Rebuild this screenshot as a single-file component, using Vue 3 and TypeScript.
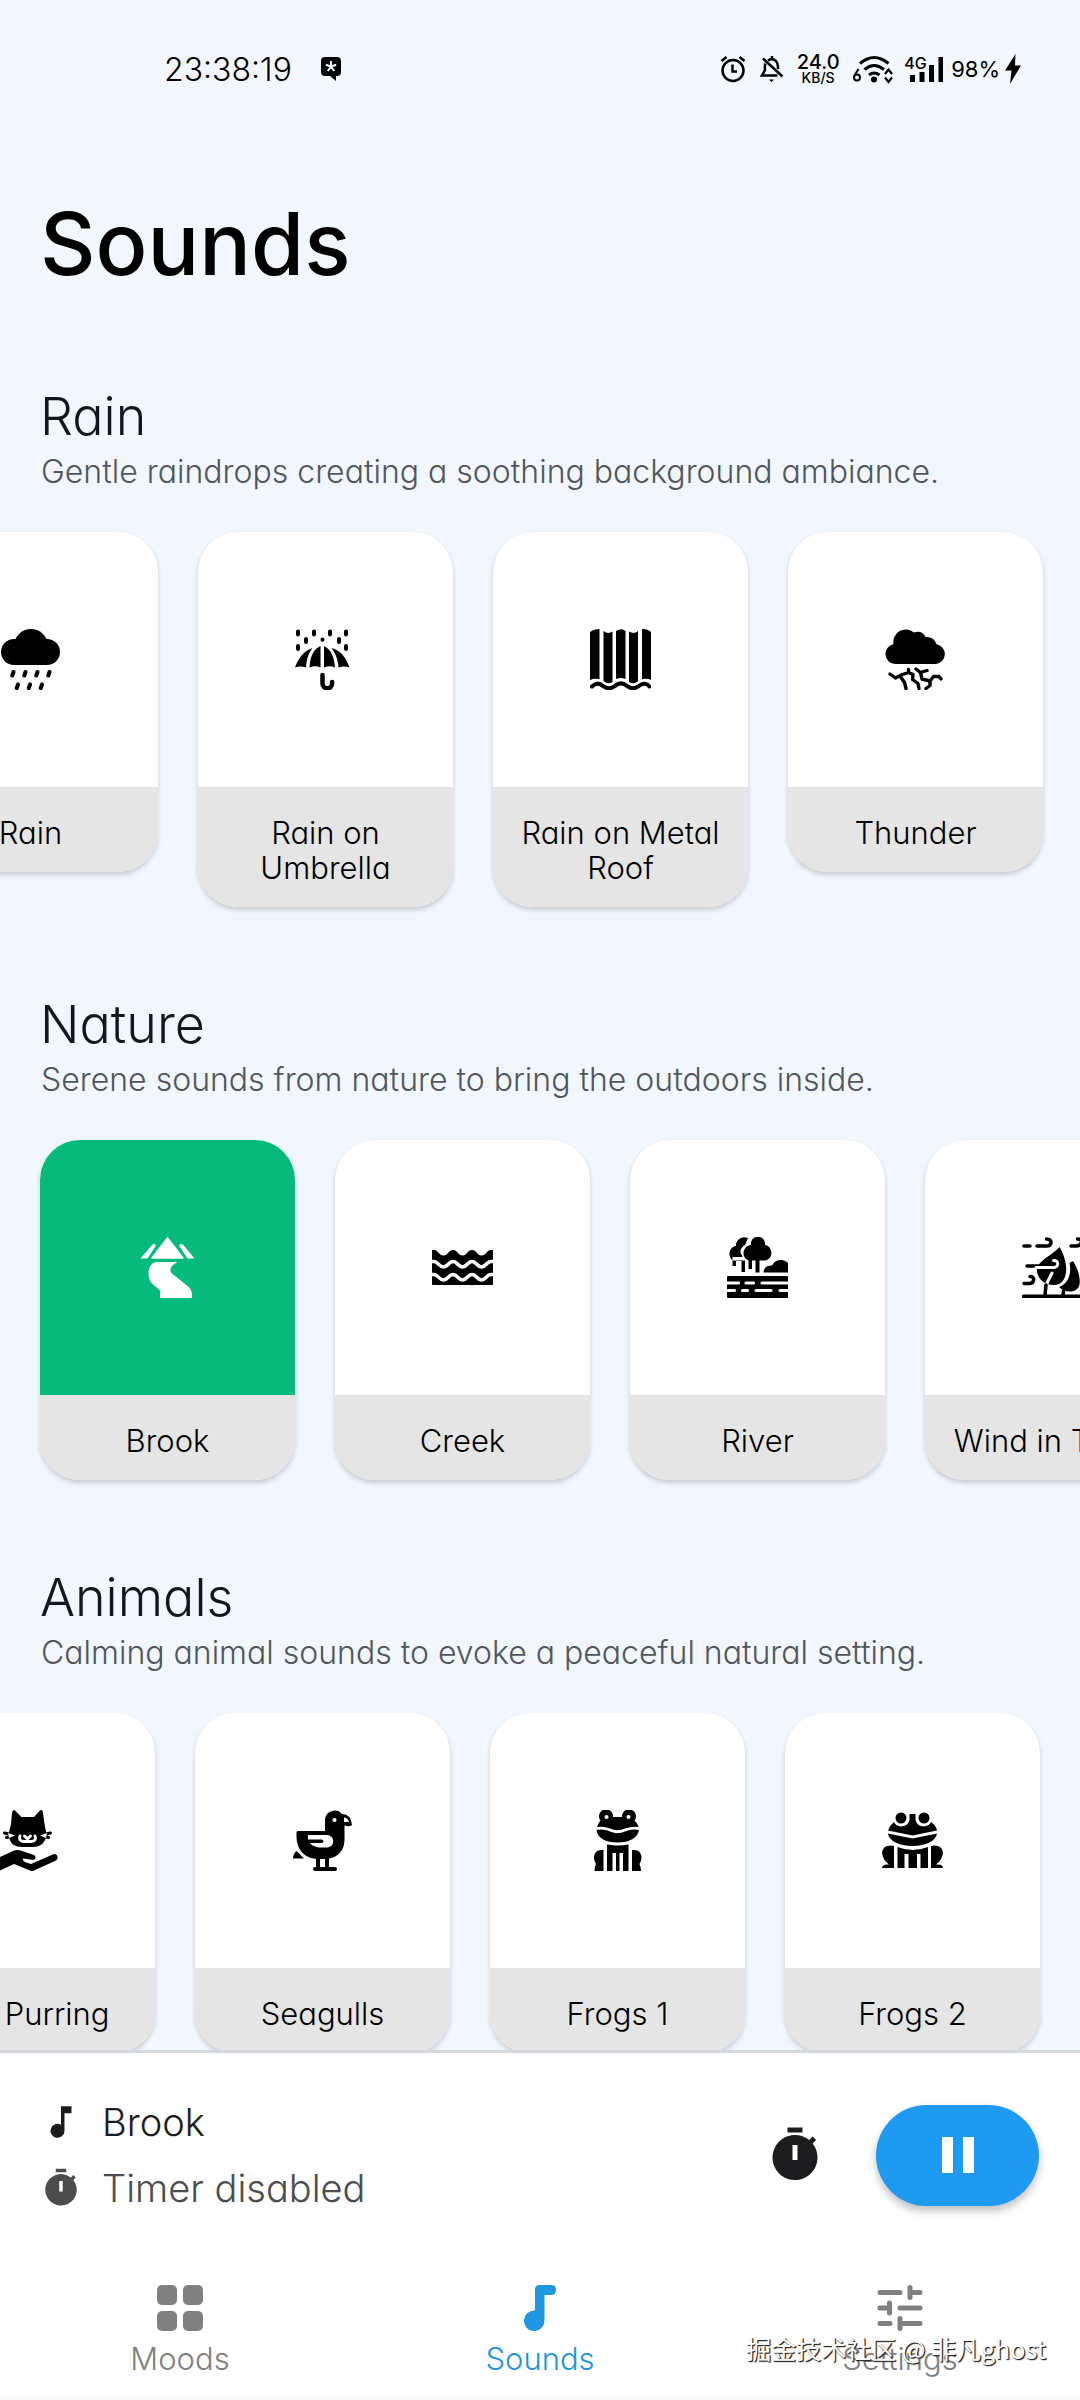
<script setup lang="ts">
import { onMounted, ref } from 'vue'

interface Sound {
  name: string
  icon: string
}

interface Section {
  title: string
  text: string
  scroll: number
  sounds: Sound[]
}

const icons: Record<string, string> = {
  rain: `<rect x="1" y="10" width="59" height="26" rx="13"/><circle cx="31" cy="17" r="17"/>
    <path class="line" stroke-width="4" d="M13.5 43l-1.2 3.5M25.5 43l-1.2 3.5M37.5 43l-1.2 3.5M49.5 43l-1.2 3.5M18 55.500l-1.200 3.500M30 55.500l-1.200 3.500M42 55.500l-1.200 3.500"/>`,
  umbrella: `<path class="line" stroke-width="4" d="M3 2.500v3M19 2.500v3M35 2.500v3M51 2.500v3M11 10v3M44 10v3M27.500 10.500v.2M3 17v3M51 17v3"/>
    <path d="M0 38.500C4 28 9 22 17.500 19C13 25 11.500 31 11 38.500Q5 36.500 0 38.500zM14.500 38.500C15 29 18 20 25.500 17V38.500Q20 36 14.500 38.500zM29 17C36 20 39.500 29 40 38.500Q35 36 29 38.500zM43.500 38.500C43 31 41 25 36.500 19C45 21 51 28 54.500 38.500Q49 36.500 43.500 38.500z"/>
    <path class="line" stroke-width="4.500" d="M27.500 46v8.500a4.800 4.800 0 0 0 9.600 0v-1.500"/>`,
  metal: `<path d="M0 3Q4 0 9.500 0V50Q4 49 0 51zM13.500 2Q18 5.500 22.500 2.500V53Q18 56 13.500 52zM26 2Q31-1.500 35.500 2V50Q31 48 26 50zM39 2.500Q44 5.500 48 2V52Q44 56 39 53zM52 0Q58 0 61 3V51Q58 49 52 50z"/>
    <path class="line" stroke-width="4" d="M2 57.500C5 54.500 9 53.500 13 57C17 60 21 60 25 57C29 53.500 33 53.500 37 57C41 60 45 60 49 57C53 53.500 57 54.500 59.500 57.500"/>`,
  thunder: `<path d="M10 35A10 10 0 0 1 8.500 15.200A12.500 12.500 0 0 1 29 3.500Q37 1 40.500 8Q49 7.500 51.500 15.200A10 10 0 0 1 51 35z"/>
    <path class="line" stroke-width="3.400" d="M5 45l5.500 4 7-3.500 6-2V40.500M15 47l4.500 6.500 1.500 6M23.500 43.500l4.500 2-.5 5 5.500 4 1 5M31 40l4.500 3.500 6.500-2M35.500 43.500l1.500 6.500 8 2v4.500l-4 3M45 52l3.500-4.500h5.500l2 2.500"/>`,
  brook: `<path stroke="currentColor" stroke-width="1.500" stroke-linejoin="round" d="M30.500 1L46 21H15z"/>
    <path d="M3.500 21.500L15.500 7.500Q18 6 19 8.500L10.500 21.500zM57.500 21.500L46 7.500Q43.500 6 42 8.500L50.500 21.500z"/>
    <path d="M19 25H40.500C35 28 31 33 35 36.500L50 48.500Q56 53 55 61H23V57Q25 54 19 50C13 45 11.500 42 11.500 36Q11.500 27 19 25z"/>`,
  creek: `<path d="M0 13h2c4 0 5 5.500 9.500 5.500S16.500 13 21 13s5 5.500 9.500 5.500S35.500 13 40 13s5 5.500 9.500 5.500S55 13 59 13h2v34q0 1-1 1H1q-1 0-1-1z"/>
    <path class="gap" stroke-width="3.600" d="M-1 24.500h3c4 0 5 5.500 9.500 5.500s5-5.500 9.500-5.500 5 5.500 9.500 5.500 5-5.500 9.500-5.500 5 5.500 9.500 5.500 5-5.500 9.500-5.500h3M-1 37.500h3c4 0 5 5.500 9.500 5.500s5-5.500 9.500-5.500 5 5.500 9.500 5.500 5-5.500 9.500-5.500 5 5.500 9.500 5.500 5-5.500 9.500-5.500h3"/>`,
  river: `<path d="M21 1C14-2 8.500 4 9 9C2 10 0 20 6 23.500H18V35h-3.500V24H9v5H5.500V20H16Q10 13 18 8z"/>
    <path stroke="#fff" stroke-width="3.500" d="M24 8C23-3 39-3 38 8C46 9 47 22 38 23.500H23C14 22 15 9 24 8z"/>
    <path d="M24 8C23-3 39-3 38 8C46 9 47 22 38 23.500H32.500V35.500H28.500V23.500H25V32H21.500V23.500C14 21 15 9 24 8zM36.500 35.500Q37 28 45 28.500C48 22 57 21.500 61 26V35.500z"/>
    <rect y="39" width="61" height="22" rx="1"/>
    <path class="gap" stroke-width="3.200" stroke-linecap="round" d="M-2 46H11.500M19 46H26.500M35 46H63M-2 53.500H7.500M15.500 53.500H20.500M29 53.500H44M53 53.500H63"/>`,
  wind: `<path class="line" stroke-width="3.500" d="M2 9H8M15 9H25C30 9 31 2 24.500 2M49 9H54C60 9 62 2 55.500 2M5 29H20M2 46.500H7C13 46.500 13 39 8 39.500"/>
    <path d="M37.500 10C46 24 47 42 37 47C29 50 17 46 15 35C14 24 27 21 37.500 10zM51 24C58 35 60 48 55 52C49 57 41 54 37 50C49 46 49 32 47.500 26z"/>
    <path class="gap" stroke-width="3" stroke-linecap="round" d="M14 30.500H32C37 30.500 37 23 31.500 23.500M30 36L24 48"/>
    <path class="line" stroke-width="3.500" d="M24 48L23 58M41.500 54L41 58M1.500 59.300H60"/>`,
  cat: `<path d="M17.500 0L24.500 7H37L43.500 0Q46 0 46 3L47.500 14L49.500 24C49 33 43 37 36 37H25C17 37 12 33 11.500 24L14 14L15 3Q15.500 0 17.500 0z"/>
    <path class="line" stroke-width="3" d="M7.500 23L12 24M9.500 27.500L13 26.500M53.500 23L49 24M51.500 27.500L48 26.500"/>
    <path fill="#fff" d="M11 23l7 2.500-6 2.500zM50 23l-7 2.500 6 2.500z"/>
    <path class="gap" stroke-width="3" stroke-linecap="round" d="M23 26Q21 31 27 31.500H34Q40 31 38 26M27.500 26L30.500 29L33.500 26"/>
    <path d="M3 47L16 41Q20 39 25 41L37 45Q40 47 37 50L26 48.500Q25 52 34 54L57 44Q61 44 60.500 48.500Q60 50 58 51L38 60Q35.500 62 33 60.500L17 54L3 60.500z"/>`,
  seagull: `<path d="M33 10A9.700 9.700 0 0 1 50 4Q59 4 60 15Q58 17 52.500 15.500V30C52.500 42 44 49 32 49H27C13 49 4.500 40 4.500 26V22.500Q4.500 21 6 21H33z"/>
    <circle cx="42.500" cy="10" r="2" fill="#fff"/><path fill="#fff" d="M52 7.500Q56 8 57 12H52z"/>
    <path fill="#fff" d="M16 25H35A6 6 0 0 1 35 37.500H27Q20 36 18 33H30Q33 31.500 30 29.500H16z"/>
    <path d="M4.500 41L12 48.500H1Q1 44 4.500 41zM24 48h4v10h-4zM33 48h4v10h-4z"/><rect x="21" y="57" width="24" height="4" rx="2"/>`,
  frog: `<path d="M10 17C12 12 12 13 13.500 10.500A7 7 0 1 1 26 7H35A7 7 0 1 1 47.500 10.500C49 13 50 12 51.500 17Q45 16 38 18.500Q30.500 22 23 18.500Q17 16 10 17zM9.500 20Q17 18.500 23 21.500Q30.500 25 38 21.500Q45 18.500 52 20C51 28 42 32.500 30.500 32.500S10 28 9.500 20z"/>
    <circle cx="19.500" cy="7" r="2" fill="#fff"/><circle cx="41.500" cy="7" r="2" fill="#fff"/>
    <path d="M20 34.500Q30.500 36.500 41.500 34.500V61H36V43H32.500V61H29V43H25.500V61H20zM16.500 40V61H7.500Q7.500 57 9 54Q5 47 9 42Q11 39.500 16.500 40zM45 40V61H54Q54 57 52.500 54Q56.500 47 52.500 42Q50.500 39.500 45 40z"/>`,
  toad: `<path d="M27.500 4H33.500V10Q35 16 42 16.500Q48 15.500 49 12Q54 15 55 20.500L30.500 25.500L6 20.500Q8 15 12 12Q13 15.500 19 16.500Q26 16 27.500 10zM6 23.500L30.500 28.500L55 23.500C54 31 44 36 30.500 36S7 31 6 23.500z"/>
    <circle cx="19" cy="8" r="5.500"/><circle cx="42" cy="8" r="5.500"/>
    <path d="M15.500 37Q30.500 43 46 37V58H38.500V44H35V58H26.500V44H22.500V58H15.500zM12 36V58H0Q0 54.500 5 54.500H7Q0 49 0 42Q2 34 12 36zM49 36V58H61Q61 54.500 56 54.500H54Q61 49 61 42Q59 34 49 36z"/>`,
}

const sections: Section[] = [
  {
    title: 'Rain',
    text: 'Gentle raindrops creating a soothing background ambiance.',
    scroll: 137,
    sounds: [
      { name: 'Rain', icon: 'rain' },
      { name: 'Rain on Umbrella', icon: 'umbrella' },
      { name: 'Rain on Metal Roof', icon: 'metal' },
      { name: 'Thunder', icon: 'thunder' },
    ],
  },
  {
    title: 'Nature',
    text: 'Serene sounds from nature to bring the outdoors inside.',
    scroll: 0,
    sounds: [
      { name: 'Brook', icon: 'brook' },
      { name: 'Creek', icon: 'creek' },
      { name: 'River', icon: 'river' },
      { name: 'Wind in Trees', icon: 'wind' },
    ],
  },
  {
    title: 'Animals',
    text: 'Calming animal sounds to evoke a peaceful natural setting.',
    scroll: 140,
    sounds: [
      { name: 'Cat Purring', icon: 'cat' },
      { name: 'Seagulls', icon: 'seagull' },
      { name: 'Frogs 1', icon: 'frog' },
      { name: 'Frogs 2', icon: 'toad' },
    ],
  },
]

const active = ref('Brook')
const rows = ref<HTMLElement[]>([])

onMounted(() => {
  rows.value.forEach((row, i) => {
    row.scrollLeft = sections[i].scroll
  })
})
</script>

<template>
  <div class="app">
    <header class="status">
      <div class="status-side">
        <time class="clock">23:38:19</time>
        <svg width="22" height="26" viewBox="0 0 22 26" aria-hidden="true">
          <path d="M5 1h12a4 4 0 0 1 4 4v11a4 4 0 0 1-4 4h-1v5l-6-5H5a4 4 0 0 1-4-4V5a4 4 0 0 1 4-4z" />
          <path d="M11 10.500V5M11 10.500l5.200-1.700M11 10.500l-5.200-1.700M11 10.500l3.200 4.500M11 10.500l-3.200 4.500" stroke="#f2f7fe" stroke-width="2" fill="none" />
        </svg>
      </div>
      <div class="status-side right">
        <svg width="26" height="28" viewBox="0 0 26 28" fill="none" stroke="#000" stroke-width="2.500" aria-hidden="true">
          <circle cx="13" cy="15.500" r="10.500" /><path d="M12.500 9.500v7h4.500M1.500 6l5-4M24.500 6l-5-4" />
        </svg>
        <svg class="bell" width="24" height="28" viewBox="0 0 24 28" fill="none" stroke="#000" stroke-width="2.500" aria-hidden="true">
          <path d="M8 5.500Q12 2.500 16 6Q18.500 9 18 14M5.500 8.500Q4.500 11 5 15L2 20.500H17.500M3 3.500L22.500 21.500M12 1v3" /><path d="M9 24.500h5l-2.500 2.500z" fill="#000" stroke="none" />
        </svg>
        <div class="speed"><span>24.0</span><small>KB/S</small></div>
        <svg class="wifi" width="42" height="30" viewBox="0 0 42 30" fill="none" stroke="#000" stroke-width="3" aria-hidden="true">
          <path d="M8 9.500Q22 -2.500 36.500 9.500M12.500 15.500Q22 7.500 32 15.500M17 21Q22 17 27.500 21" />
          <circle cx="22" cy="25.500" r="3" fill="#000" stroke="none" />
          <path d="M6.500 15L2.500 21.500" stroke-width="2" /><circle cx="5" cy="23.500" r="3" stroke-width="2" />
          <path d="M33 20l3.500-4.500L40 20M33 23.500l3.500 4.500L40 23.500" stroke-width="2.200" />
        </svg>
        <div class="cell">
          <span>4G</span>
          <svg width="38" height="28" viewBox="0 0 38 28" aria-hidden="true">
            <path d="M4 20h5v7H4zM13.500 17h5v10h-5zM23 10h5v17h-5zM32.500 2h4.500v25h-4.500z" />
          </svg>
        </div>
        <span class="battery">98%</span>
        <svg width="18" height="32" viewBox="0 0 18 32" aria-hidden="true"><path d="M11.500 1L1 17.500h6.500L6 31 17 12.500h-6z" /></svg>
      </div>
    </header>

    <main class="content">
      <h1>Sounds</h1>
      <section v-for="s in sections" :key="s.title">
        <h2>{{ s.title }}</h2>
        <p>{{ s.text }}</p>
        <div ref="rows" class="row">
          <button
            v-for="item in s.sounds"
            :key="item.name"
            type="button"
            class="card"
            :class="{ on: item.name === active }"
            :aria-pressed="item.name === active"
            @click="active = item.name"
          >
            <span class="art">
              <svg width="61" height="61" viewBox="0 0 61 61" aria-hidden="true" v-html="icons[item.icon]"></svg>
            </span>
            <span class="label">{{ item.name }}</span>
          </button>
        </div>
      </section>
    </main>

    <footer class="bottom">
      <div class="player">
        <div class="now">
          <div class="now-line">
            <svg width="42" height="42" viewBox="0 0 24 24" aria-hidden="true"><path d="M12 3v10.550A4 4 0 1 0 14 17V7h4V3h-6z" /></svg>
            <span>{{ active }}</span>
          </div>
          <div class="now-line muted">
            <svg width="42" height="42" viewBox="0 0 24 24" aria-hidden="true"><path d="M9 1h6v2H9zM19.030 7.390l1.420-1.420c-.430-.510-.900-.990-1.410-1.410l-1.420 1.420A9 9 0 1 0 19.030 7.390zM13 14h-2V8h2v6z" /></svg>
            <span>Timer disabled</span>
          </div>
        </div>
        <button type="button" class="timer" aria-label="Timer">
          <svg width="60" height="60" viewBox="0 0 24 24" aria-hidden="true"><path d="M9 1h6v2H9zM19.030 7.390l1.420-1.420c-.430-.510-.900-.990-1.410-1.410l-1.420 1.420A9 9 0 1 0 19.030 7.390zM13 14h-2V8h2v6z" /></svg>
        </button>
        <button type="button" class="pause" aria-label="Pause">
          <svg width="32" height="36" viewBox="0 0 32 36" aria-hidden="true"><path d="M0 0h11v36H0zM21 0h11v36H21z" /></svg>
        </button>
      </div>
      <nav>
        <a href="#moods">
          <svg width="46" height="46" viewBox="0 0 46 46" aria-hidden="true">
            <rect width="20" height="20" rx="5" /><rect x="26" width="20" height="20" rx="5" /><rect y="26" width="20" height="20" rx="5" /><rect x="26" y="26" width="20" height="20" rx="5" />
          </svg>
          Moods
        </a>
        <a href="#sounds" class="current">
          <svg width="46" height="46" viewBox="0 0 46 46" aria-hidden="true">
            <path d="M18 4.500Q18 0 22.500 0H34Q39 0 39 5T34 10H27.500V36A10.300 10.300 0 1 1 18 25.500z" />
          </svg>
          Sounds
        </a>
        <a href="#settings">
          <svg width="46" height="46" viewBox="0 0 46 46" fill="none" stroke="currentColor" stroke-width="5" stroke-linecap="round" aria-hidden="true">
            <path d="M3 7.500H23M33 2.500V12.500M33 7.500H43M3 23H12.500M12.500 18V28M23 23H43M3 38.500H13M23 33.500V43.500M23 38.500H43" />
          </svg>
          Settings
        </a>
        <span class="credit">掘金技术社区 @ 非凡ghost</span>
      </nav>
    </footer>
  </div>
</template>

<style>
body {
  margin: 0;
}
</style>

<style scoped>
.app {
  display: flex;
  flex-direction: column;
  height: 100vh;
  background: #f2f7fe;
  color: #000;
  font-family: Inter, "Noto Sans", "Noto Sans CJK SC", sans-serif;
  font-weight: 300;
  font-feature-settings: "cv11" 1;
}

.app svg {
  display: block;
  flex: none;
}

button {
  border: 0;
  padding: 0;
  font: inherit;
  color: inherit;
  font-feature-settings: inherit;
  cursor: pointer;
}

.status {
  display: flex;
  flex: none;
  justify-content: space-between;
  align-items: center;
  height: 138px;
  padding: 0 58px 0 164px;
}

.status-side {
  display: flex;
  align-items: center;
  gap: 28px;
}

.status-side.right {
  gap: 0;
}

.clock {
  font-size: 32px;
}

.bell {
  margin: 0 12px 0 14px;
}

.speed {
  display: flex;
  flex-direction: column;
  align-items: center;
  width: 44px;
  font-size: 20px;
  line-height: 18px;
  font-weight: 500;
}

.speed small {
  font-size: 14px;
  line-height: 14px;
}

.wifi {
  margin: 0 12px;
}

.cell {
  position: relative;
}

.cell span {
  position: absolute;
  top: -2px;
  left: -2px;
  font-size: 16px;
  line-height: 20px;
  font-weight: 500;
}

.battery {
  margin: 0 4px 0 7px;
  font-size: 22px;
  font-weight: 400;
}

.content {
  flex: 1;
  min-height: 0;
  overflow: hidden;
}

h1 {
  margin: 56px 40px 93px;
  font-size: 86px;
  line-height: 100px;
  font-weight: 500;
}

h2 {
  margin: 0 40px 5px;
  font-size: 52px;
  line-height: 60px;
  font-weight: 300;
  color: #11171c;
}

p {
  margin: 0 41px;
  font-size: 32px;
  line-height: 40px;
  color: #50565c;
}

.row {
  display: flex;
  align-items: flex-start;
  gap: 40px;
  padding: 40px 40px 20px;
  margin-bottom: 68px;
  overflow-x: auto;
  scrollbar-width: none;
}

.card {
  flex: none;
  width: 255px;
  border-radius: 40px;
  overflow: hidden;
  background: #fff;
  box-shadow: 0 3px 5px rgba(0, 0, 0, 0.18);
}

.art {
  display: flex;
  align-items: center;
  justify-content: center;
  height: 255px;
}

.card.on .art {
  background: #06ba7c;
  color: #fff;
}

.art svg {
  fill: currentColor;
}

.art :deep(.line) {
  fill: none;
  stroke: currentColor;
  stroke-linecap: round;
  stroke-linejoin: round;
}

.art :deep(.gap) {
  fill: none;
  stroke: #fff;
}

.label {
  display: block;
  padding: 28px 20px 22px;
  background: #e5e5e5;
  font-size: 31px;
  line-height: 35px;
}

.bottom {
  flex: none;
  border-top: 3px solid #d5d9de;
  background: linear-gradient(#fff calc(100% - 14px), #fafafa);
}

.player {
  display: flex;
  align-items: center;
  padding: 44px 41px 46px 38px;
}

.now {
  display: flex;
  flex: 1;
  flex-direction: column;
  gap: 16px;
  font-size: 38px;
  line-height: 50px;
  color: #1c1c1e;
}

.now-line {
  display: grid;
  grid-template-columns: 46px 1fr;
  column-gap: 18px;
  align-items: center;
}

.now-line svg {
  justify-self: center;
  fill: currentColor;
}

.muted {
  color: #4c4c4e;
}

.timer {
  margin-right: 51px;
  background: none;
}

.timer svg {
  fill: #1c1c1e;
}

.pause {
  display: flex;
  align-items: center;
  justify-content: center;
  width: 163px;
  height: 101px;
  border-radius: 51px;
  background: #1e9bf0;
  box-shadow: 0 5px 8px rgba(0, 0, 0, 0.25);
}

.pause svg {
  fill: #fff;
}

nav {
  position: relative;
  display: flex;
  padding: 26px 0 23px;
}

nav a {
  display: flex;
  flex: 1;
  flex-direction: column;
  align-items: center;
  gap: 10px;
  font-size: 31px;
  line-height: 36px;
  color: #808080;
  text-decoration: none;
}

nav a svg {
  fill: currentColor;
}

nav a svg[fill="none"] {
  fill: none;
}

nav a.current {
  color: #1e96e0;
}

.credit {
  position: absolute;
  right: 34px;
  bottom: 34px;
  font-family: "Noto Sans CJK SC", sans-serif;
  font-size: 25px;
  line-height: 36px;
  font-weight: 400;
  color: #fff;
  text-shadow: 1px 1px 1px #222, 1px 1px 1px #444;
}
</style>
